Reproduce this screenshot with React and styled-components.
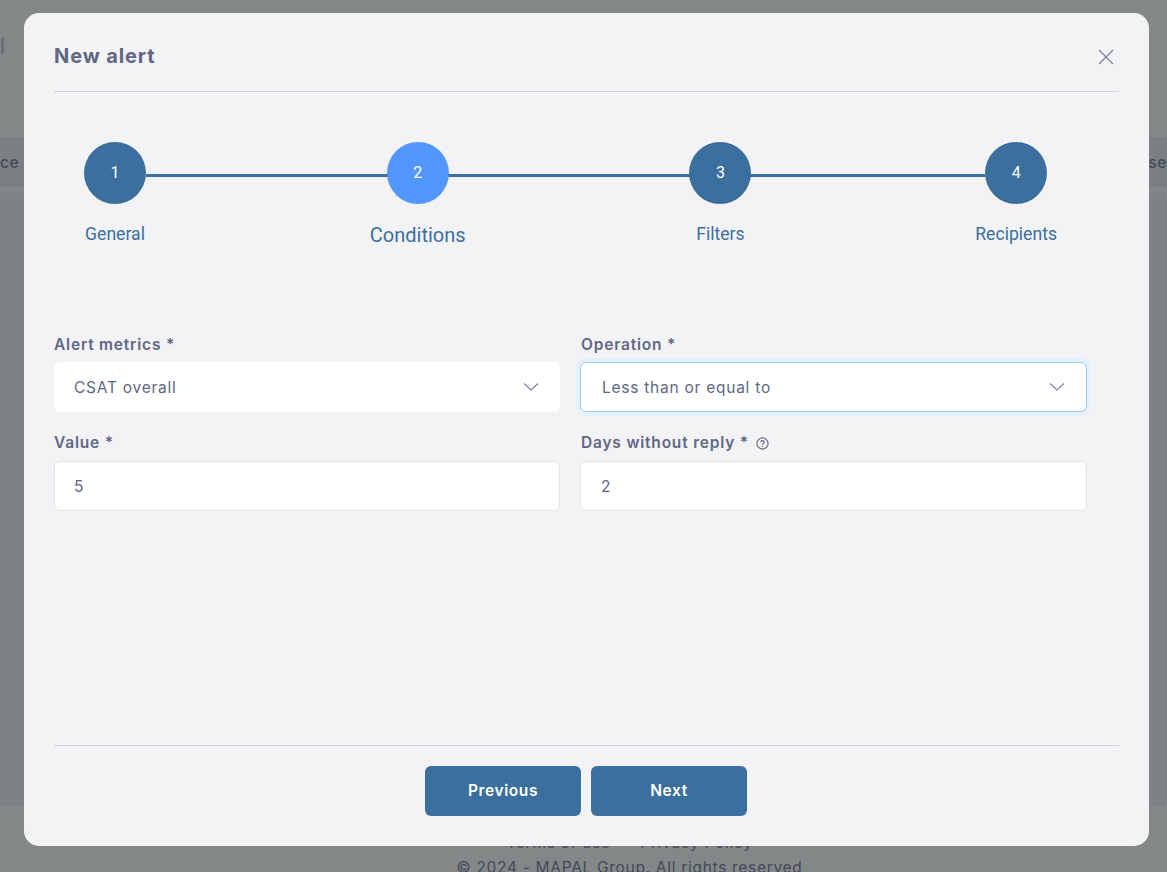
import React from 'react';
import styled, { createGlobalStyle } from 'styled-components';

const Global = createGlobalStyle`
  html, body { margin: 0; padding: 0; height: 100%; overflow: hidden; }
  body { font-family: Inter, "Open Sans", sans-serif; background: #848787; }
  #root { height: 100%; }
`;

const Page = styled.div`
  position: relative;
  height: 872px;
  overflow: hidden;
  display: flex;
  flex-direction: column;
  background: #848787;
  color: #3f4555;
  font-family: Inter, sans-serif;
`;
const TopMark = styled.div`
  width: 3px;
  height: 16px;
  margin: 38px 0 0 1px;
  background: #6d7074;
`;
const TableHead = styled.div`
  margin-top: 83px;
  height: 50px;
  background: #7b7f81;
  display: flex;
  align-items: center;
  justify-content: space-between;
  font-size: 15.5px;
  letter-spacing: 0.6px;
  font-weight: 500;
  color: #43495a;
`;
const TableGap = styled.div`
  height: 6px;
  background: #848787;
`;
const TableBody = styled.div`
  flex: 1;
  background: #7e8284;
`;
const Footer = styled.div`
  height: 66px;
  flex: none;
  box-sizing: border-box;
  background: #848787;
  padding: 24px 0 0 92px;
  text-align: center;
  white-space: nowrap;
  font-size: 15.5px;
  letter-spacing: 0.7px;
  line-height: 25px;
  color: #43495a;
`;

const Modal = styled.div`
  position: absolute;
  left: 24px;
  top: 13px;
  width: 1125px;
  height: 833px;
  box-sizing: border-box;
  padding: 0 30px;
  background: #f3f3f6;
  border-radius: 15px;
  display: flex;
  flex-direction: column;
`;
const Header = styled.div`
  height: 79px;
  flex: none;
  box-sizing: border-box;
  border-bottom: 1px solid #d2d0de;
  display: flex;
  align-items: center;
  justify-content: space-between;
  padding-top: 8px;
`;
const Title = styled.h2`
  margin: 0;
  font-size: 20px;
  letter-spacing: 0.9px;
  font-weight: 700;
  color: #606785;
`;
const CloseButton = styled.button`
  border: 0;
  background: none;
  padding: 0;
  margin: 2px 5px 0 0;
  width: 16px;
  height: 16px;
  display: block;
  svg { display: block; }
`;

const Stepper = styled.div`
  margin-top: 50px;
  height: 110px;
  flex: none;
  display: flex;
  justify-content: space-between;
  padding: 0 62px 0 30px;
  position: relative;
`;
const StepLine = styled.div`
  position: absolute;
  left: 92px;
  right: 134px;
  top: 32px;
  height: 3px;
  background: #3b6f9e;
`;
const Step = styled.div`
  position: relative;
  display: flex;
  flex-direction: column;
  align-items: center;
`;
const Circle = styled.div`
  width: 62px;
  height: 62px;
  flex: none;
  border-radius: 50%;
  background: ${p => (p.$active ? '#5297fd' : '#3b6f9e')};
  color: #fff;
  font: 400 16px/62px Roboto, sans-serif;
  text-align: center;
`;
const StepLabel = styled.div`
  margin-top: ${p => (p.$active ? '19px' : '18px')};
  white-space: nowrap;
  font-family: Roboto, sans-serif;
  font-size: ${p => (p.$active ? '20px' : '17.6px')};
  line-height: 24px;
  color: #3b6f9e;
`;

const Form = styled.div`
  margin-top: 84px;
  width: 1033px;
  display: grid;
  grid-template-columns: 506px 507px;
  column-gap: 20px;
  row-gap: 22px;
`;
const Field = styled.div`
  display: flex;
  flex-direction: column;
`;
const Label = styled.label`
  height: 18px;
  margin-bottom: ${p => (p.$first ? '8px' : '9px')};
  padding-left: ${p => (p.$inset ? '1px' : '0')};
  display: flex;
  align-items: center;
  gap: 7px;
  font-size: 15.5px;
  line-height: 18px;
  letter-spacing: 0.8px;
  font-weight: 600;
  color: #606785;
  svg { display: block; }
`;
const Control = styled.div`
  height: 50px;
  box-sizing: border-box;
  display: flex;
  align-items: center;
  justify-content: space-between;
  padding: 0 ${p => (p.$focus ? '21px' : '20px')} 0 ${p => (p.$focus ? '21px' : p.$left ? '19px' : '20px')};
  background: #fff;
  border-radius: 6px;
  border: 1px solid ${p => (p.$focus ? '#9ccbf3' : p.$plain ? 'transparent' : '#e4e4ec')};
  box-shadow: ${p => (p.$focus ? '0 0 0 4px #e6f0fa' : 'none')};
  font-size: 15.5px;
  letter-spacing: 0.75px;
  color: #606785;
  svg { display: block; }
`;

const Footerbar = styled.div`
  margin-top: auto;
  height: 101px;
  flex: none;
  box-sizing: border-box;
  border-top: 1px solid #d2d0de;
  display: flex;
  justify-content: center;
  gap: 10px;
  padding: 20px 1px 0 0;
`;
const ActionButton = styled.button`
  width: 156px;
  height: 50px;
  border: 0;
  border-radius: 6px;
  padding: 0 0 2px;
  background: #3b6f9e;
  color: #fff;
  font-family: Inter, sans-serif;
  font-size: 15.5px;
  letter-spacing: 0.6px;
  font-weight: 600;
`;

const Chevron = () => (
  <svg width="16" height="16" viewBox="0 0 16 16" fill="none" stroke="#7c83a6" strokeWidth="1.2">
    <path d="M1 4.5 8 11l7-6.5" />
  </svg>
);

const steps = [
  { n: 1, label: 'General' },
  { n: 2, label: 'Conditions', active: true },
  { n: 3, label: 'Filters' },
  { n: 4, label: 'Recipients' },
];

export default function App() {
  return (
    <>
      <Global />
      <Page>
        <TopMark />
        <TableHead>
          <span>ce</span>
          <span>se</span>
        </TableHead>
        <TableGap />
        <TableBody />
        <Footer>
          Terms of use &nbsp;•&nbsp; Privacy Policy
          <br />
          © 2024 - MAPAL Group. All rights reserved
        </Footer>
        <Modal>
          <Header>
            <Title>New alert</Title>
            <CloseButton aria-label="Close">
              <svg width="16" height="16" viewBox="0 0 16 16" fill="none" stroke="#7c83a6" strokeWidth="1.3">
                <path d="M1 1l14 14M15 1 1 15" />
              </svg>
            </CloseButton>
          </Header>
          <Stepper>
            <StepLine />
            {steps.map(s => (
              <Step key={s.n}>
                <Circle $active={s.active}>{s.n}</Circle>
                <StepLabel $active={s.active}>{s.label}</StepLabel>
              </Step>
            ))}
          </Stepper>
          <Form>
            <Field>
              <Label $first>Alert metrics *</Label>
              <Control $plain $left>CSAT overall<Chevron /></Control>
            </Field>
            <Field>
              <Label $first $inset>Operation *</Label>
              <Control $focus>Less than or equal to<Chevron /></Control>
            </Field>
            <Field>
              <Label>Value *</Label>
              <Control $left>5</Control>
            </Field>
            <Field>
              <Label $inset>
                Days without reply *
                <svg width="13" height="13" viewBox="0 0 13 13" fill="none" stroke="#606785" strokeWidth="1.1">
                  <circle cx="6.5" cy="6.5" r="5.6" />
                  <path d="M4.8 5.2c0-1 .8-1.6 1.7-1.6s1.7.6 1.7 1.5c0 1.3-1.7 1.3-1.7 2.6M6.5 9v.9" />
                </svg>
              </Label>
              <Control>2</Control>
            </Field>
          </Form>
          <Footerbar>
            <ActionButton>Previous</ActionButton>
            <ActionButton>Next</ActionButton>
          </Footerbar>
        </Modal>
      </Page>
    </>
  );
}
